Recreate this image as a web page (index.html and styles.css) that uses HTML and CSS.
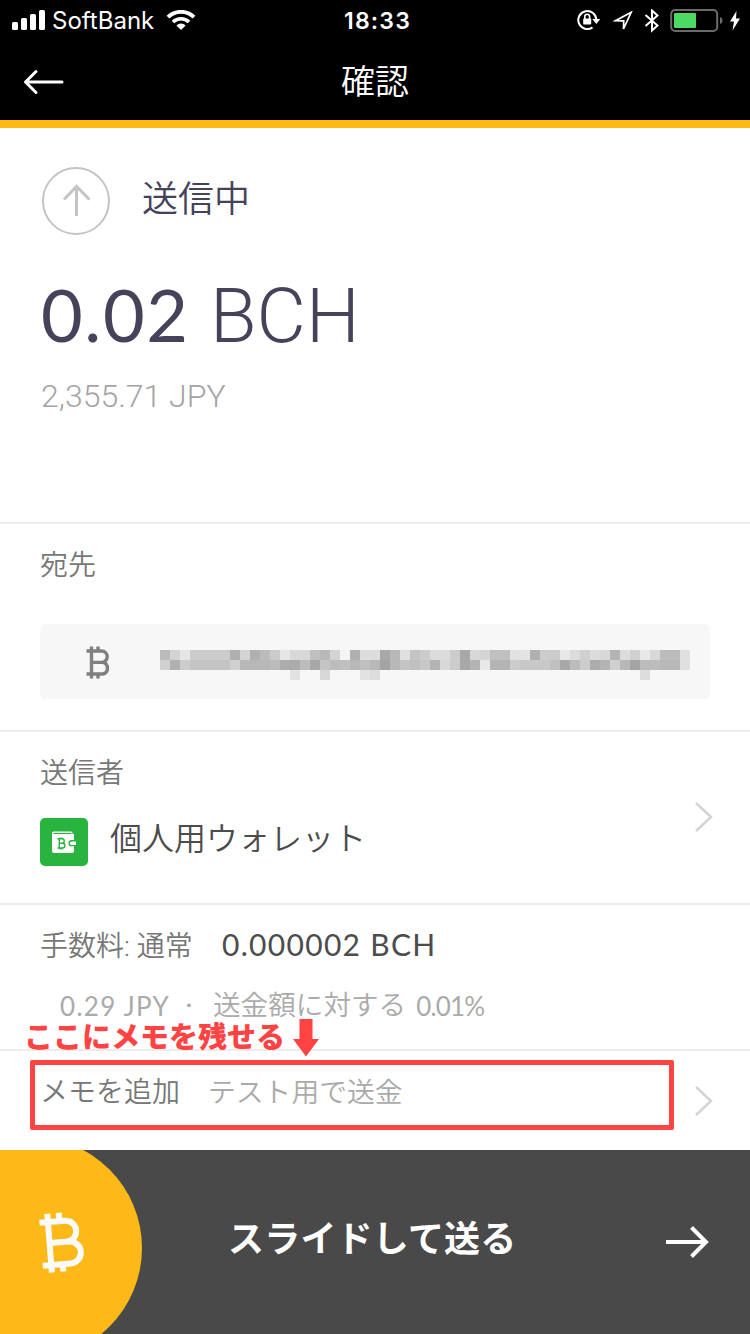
FILE: index.html
```html
<!DOCTYPE html>
<html lang="ja">
<head>
<meta charset="UTF-8">
<meta name="viewport" content="width=device-width, initial-scale=1.0">
<title>確認</title>
<link rel="stylesheet" href="styles.css">
</head>
<body>
    <header class="header">
        <div class="status">
            <div class="status-left">
                <svg width="34" height="22" viewBox="0 0 34 22" fill="#fff">
                    <rect x="0" y="12" width="6" height="8" rx="1.5"/>
                    <rect x="9" y="8" width="6" height="12" rx="1.5"/>
                    <rect x="18" y="4" width="6" height="16" rx="1.5"/>
                    <rect x="27" y="0" width="6" height="20" rx="1.5"/>
                </svg>
                <span class="carrier">SoftBank</span>
                <svg class="wifi" width="30" height="22" viewBox="0 0 30 22" fill="none" stroke="#fff" stroke-width="4">
                    <path d="M2 7.2a18.5 18.5 0 0 1 26 0"/>
                    <path d="M7 12a11.5 11.5 0 0 1 16 0" stroke-width="3.6"/>
                    <path d="M15 20l-4.6-4.6a6.5 6.5 0 0 1 9.2 0z" fill="#fff" stroke="none"/>
                </svg>
            </div>
            <span class="clock">18:33</span>
            <div class="status-right">
                <svg width="24" height="22" viewBox="0 0 24 22">
                    <path d="M15.5 17.4A9 9 0 1 1 19.3 10" fill="none" stroke="#fff" stroke-width="2"/>
                    <path d="M15.3 9h8l-4 5z" fill="#fff"/>
                    <rect x="6.2" y="8.5" width="8" height="6" rx="0.8" fill="#fff"/>
                    <path d="M7.8 9V6.7a2.4 2.4 0 0 1 4.8 0V9" fill="none" stroke="#fff" stroke-width="1.6"/>
                </svg>
                <svg class="location" width="20" height="20" viewBox="0 0 20 20" fill="none" stroke="#fff" stroke-width="1.7">
                    <path d="M18.2 1.3L2.5 9.7l8.2.2-.2 8z"/>
                </svg>
                <svg class="bluetooth" width="16" height="24" viewBox="0 0 16 24" fill="none" stroke="#fff" stroke-width="2">
                    <path d="M1.5 6l12 10.5L8 21.5V1.5l5.5 5L1.5 17"/>
                </svg>
                <svg class="battery" width="54" height="24" viewBox="0 0 54 24">
                    <rect x="1.2" y="1" width="46" height="21" rx="4" fill="none" stroke="#6b6b6b" stroke-width="2"/>
                    <rect x="4" y="4" width="22" height="15" rx="1" fill="#4cd964"/>
                    <path d="M50 8a3.7 3.7 0 0 1 0 7z" fill="#6b6b6b"/>
                </svg>
                <svg class="bolt" width="12" height="20" viewBox="0 0 12 20" fill="#fff">
                    <path d="M7.5 0L1 10.5h4L3.5 19.5 11 7.5H7z"/>
                </svg>
            </div>
        </div>
        <div class="nav">
            <svg class="back" width="42" height="26" viewBox="0 0 42 26" fill="none" stroke="#fff" stroke-width="3" stroke-linecap="round" stroke-linejoin="round">
                <path d="M40 13H3.5M14 2.5L3.5 13l10.5 10.5"/>
            </svg>
            <h1 class="title">確認</h1>
        </div>
    </header>

    <section class="amount">
        <div class="sending">
            <svg width="70" height="70" viewBox="0 0 70 70" fill="none" stroke="#c4c4c4">
                <circle cx="35" cy="35" r="33" stroke-width="2"/>
                <path d="M35.5 50V21M23 33.5l12.5-13 13 13" stroke-width="3"/>
            </svg>
            <span class="sending-text">送信中</span>
        </div>
        <div class="total"><span class="total-number">0.02</span><span class="total-unit">BCH</span></div>
        <div class="fiat">2,355.71 JPY</div>
    </section>

    <section class="to">
        <h2 class="label">宛先</h2>
        <div class="address">
            <svg class="coin" width="26" height="34" viewBox="0 0 26 34" fill="none" stroke="#808080" stroke-width="3.4">
                <path d="M.5 5H15.500a5.700 5.700 0 0 1 0 11.400H5.500M15.500 16.400h1.500a6 6 0 0 1 0 11.600H.5M5.500 5v23M5.500 .5v4M12 .5v4M5.500 28v4.500M12 28v4.500"/>
            </svg>
            <div class="mosaic" id="mosaic"></div>
        </div>
    </section>

    <section class="from">
        <div>
            <h2 class="label">送信者</h2>
            <div class="wallet">
                <svg width="48" height="48" viewBox="0 0 48 48">
                    <rect width="48" height="48" rx="5" fill="#29b33f"/>
                    <path d="M12 15a1.5 1.5 0 0 1 1.5-1.5H31a1.5 1.5 0 0 1 1.5 1.5v1H34v17a2 2 0 0 1-2 2H14a2 2 0 0 1-2-2z" fill="#fff"/>
                    <path d="M13.5 15.5h18" stroke="#29b33f" stroke-width="1.2"/>
                    <path d="M17.5 20.8H22a2.2 2.2 0 0 1 0 4.500h-3M22 25.300h.6a2.300 2.300 0 0 1 0 4.700h-5.100M19.300 20.800V30M20 19.500v1.500M22 19.500v1.500M20 29.500v2M22 29.500v2" fill="none" stroke="#29b33f" stroke-width="1.4"/>
                    <path d="M36 22.8h-4.5a2.4 2.4 0 0 0 0 4.8H36" fill="#fff" stroke="#29b33f" stroke-width="1.4"/>
                </svg>
                <span class="wallet-name">個人用ウォレット</span>
            </div>
        </div>
        <svg class="chevron" width="20" height="32" viewBox="0 0 20 32"><path d="M2 2l15 14L2 30"/></svg>
    </section>

    <section class="fee">
        <div class="fee-row"><span class="fee-label">手数料: 通常</span><span class="fee-value">0.000002 BCH</span></div>
        <div class="fee-detail"><span class="fee-jpy">0.29 JPY</span><span class="dot">·</span><span class="fee-ratio">送金額に対する</span><span class="fee-percent">0.01%</span></div>
    </section>

    <section class="memo">
        <span class="memo-label">メモを追加</span>
        <span class="memo-text">テスト用で送金</span>
        <svg class="chevron" width="20" height="32" viewBox="0 0 20 32"><path d="M2 2l15 14L2 30"/></svg>
        <!-- 注釈 -->
        <div class="note">
            <span class="note-text">ここにメモを残せる</span>
            <svg width="26" height="38" viewBox="0 0 26 38" fill="#ff4343"><path d="M6.5 0h13v20H26L13 37.5 0 20h6.5z"/></svg>
        </div>
        <div class="note-box"></div>
    </section>

    <footer class="slide">
        <div class="knob">
            <svg width="54" height="64" viewBox="0 0 54 64" fill="none" stroke="#fafafa" stroke-width="6">
                <g transform="rotate(-4.5 27 32)">
                    <path d="M5 11h25.5a10.5 10.5 0 0 1 0 21H14M30.5 32h2.5a11 11 0 0 1 0 22H5M13.5 9v48M13.5 2.5v8M25 2.5v8M13.5 54v7.5M25 54v7.5"/>
                </g>
            </svg>
        </div>
        <span class="slide-text">スライドして送る</span>
        <svg class="slide-arrow" width="46" height="34" viewBox="0 0 46 34" fill="none" stroke="#fff" stroke-width="4">
            <path d="M1 17h40M26.5 2.5L41 17 26.5 31.5"/>
        </svg>
    </footer>
    <script src="script.js"></script>
</body>
</html>
```

FILE: styles.css
```css
* {
    box-sizing: border-box;
}
body {
    margin: 0;
    width: 750px;
    height: 1334px;
    overflow: hidden;
    display: flex;
    flex-direction: column;
    background: #fff;
    font-family: Roboto, "Noto Sans CJK JP", sans-serif;
    font-weight: 300;
    white-space: nowrap;
}
svg {
    display: block;
    flex: none;
}
h1, h2 {
    margin: 0;
    font-weight: 300;
}

/* header */
.header {
    height: 128px;
    background: #000;
    border-bottom: 8px solid #fcb918;
    color: #fff;
}
.status {
    height: 40px;
    display: grid;
    grid-template-columns: 1fr auto 1fr;
    align-items: center;
    padding: 1px 9px 0 12px;
    font-family: Inter, sans-serif;
}
.status-left, .status-right {
    display: flex;
    align-items: center;
}
.status-right {
    justify-content: flex-end;
}
.carrier {
    margin-left: 6px;
    font-size: 24px;
    font-weight: 400;
}
.wifi {
    margin-left: 12px;
}
.clock {
    font-size: 23px;
    font-weight: 600;
    letter-spacing: 1.2px;
    padding-left: 2px;
}
.location {
    margin-left: 12px;
}
.bluetooth {
    margin-left: 11px;
}
.battery {
    margin-left: 10px;
}
.bolt {
    margin-left: 5px;
}
.nav {
    height: 80px;
    display: grid;
    grid-template-columns: 1fr auto 1fr;
    align-items: center;
    padding: 3px 22px 0;
}
.title {
    grid-column: 2;
    font-size: 34px;
    line-height: 40px;
    font-weight: 350;
}

/* amount */
.amount {
    height: 396px;
    padding: 38px 41px 0;
    border-bottom: 2px solid #ececec;
    color: #45425a;
}
.sending {
    display: flex;
    gap: 31px;
}
.sending-text {
    font-size: 36px;
    line-height: 68px;
    font-weight: 350;
}
.total {
    display: flex;
    align-items: baseline;
    margin-top: 33px;
    font-size: 76px;
    line-height: 90px;
}
.total-number {
    width: 169px;
    font-family: Lato, sans-serif;
    font-weight: 400;
    font-size: 72px;
    letter-spacing: 1.6px;
}
.fiat {
    margin-top: 15px;
    font-size: 32px;
    line-height: 40px;
    font-weight: 300;
    color: #a4a4a4;
}

/* address */
.label {
    font-size: 28px;
    line-height: 40px;
    font-weight: 350;
    color: #777;
}
.to {
    height: 208px;
    padding: 22px 40px 0;
    border-bottom: 2px solid #ececec;
}
.address {
    display: flex;
    height: 75px;
    margin-top: 38px;
    padding: 22px 20px 0 46px;
    border-radius: 6px;
    background: #f7f7f7;
}
.mosaic {
    display: grid;
    grid-template-columns: repeat(53, 10px);
    grid-auto-rows: 10px;
    margin: 4px 0 0 48px;
}

/* wallet */
.from {
    height: 173px;
    display: flex;
    justify-content: space-between;
    padding: 22px 36px 0 40px;
    border-bottom: 2px solid #ececec;
}
.wallet {
    display: flex;
    margin-top: 24px;
}
.wallet-name {
    margin-left: 22px;
    font-size: 32px;
    line-height: 42px;
    font-weight: 350;
    color: #4c4c4c;
}
.chevron {
    fill: none;
    stroke: #d4d4d4;
    stroke-width: 2.5;
}
.from .chevron {
    margin-top: 47px;
}

/* fee */
.fee {
    height: 146px;
    padding: 21px 40px 0;
    border-bottom: 2px solid #ececec;
    font-size: 28px;
    line-height: 40px;
}
.fee-row, .fee-detail {
    display: flex;
}
.fee-label {
    width: 182px;
    padding-top: 1px;
    font-weight: 350;
    color: #777;
}
.fee-value {
    font-family: Lato, sans-serif;
    font-weight: 400;
    font-size: 30px;
    line-height: 36px;
    letter-spacing: 1.3px;
    color: #4c4c4c;
}
.fee-detail {
    margin-top: 19px;
    padding-left: 20px;
    color: #aaa;
}
.fee-jpy, .fee-percent {
    font-family: Lato, sans-serif;
    font-weight: 400;
    font-size: 26px;
}
.dot {
    width: 42px;
    padding-left: 14px;
    font-weight: 500;
}
.fee-jpy {
    width: 111px;
    letter-spacing: 1.3px;
}
.fee-ratio {
    font-size: 27.6px;
    font-weight: 350;
}
.fee-percent {
    margin-left: 10px;
    letter-spacing: -0.8px;
}

/* memo */
.memo {
    position: relative;
    display: flex;
    height: 99px;
    padding: 22px 36px 0 40px;
    font-size: 28px;
    line-height: 40px;
    font-weight: 350;
}
.memo-label {
    width: 168px;
    color: #777;
}
.memo-text {
    font-size: 27.8px;
    color: #aaa;
}
.memo .chevron {
    margin: 12px 0 0 auto;
}
.note {
    position: absolute;
    left: 24px;
    top: -32px;
    display: flex;
    gap: 8px;
    color: #ff4343;
}
.note-text {
    font-size: 29px;
    line-height: 38px;
    font-weight: 900;
}
.note-box {
    position: absolute;
    left: 30px;
    top: 9px;
    width: 644px;
    height: 70px;
    border: 5px solid #ff4343;
    border-radius: 2px;
}

/* slide to send */
.slide {
    flex: 1;
    display: flex;
    align-items: center;
    overflow: hidden;
    background: #494949;
    color: #fff;
}
.knob {
    flex: none;
    display: flex;
    align-items: center;
    width: 222px;
    height: 222px;
    margin: 12px 0 0 -80px;
    padding: 0 0 12px 116px;
    border-radius: 50%;
    background: #fcb918;
}
.slide-text {
    margin: -12px auto 0 86px;
    font-size: 36px;
    font-weight: 700;
    letter-spacing: 0.2px;
}
.slide-arrow {
    margin-right: 39px;
}
```

FILE: script.js
```js
// grey level of each 10px cell, row by row
var rows = [
    "bb d4 e6 cc cc cc cc b0 d4 b0 bb cc e6 d8 d8 c0 b8 d4 f5 b0 dd dd a8 b8 e0 c4 cc dc dc cc a8 d8 d4 c0 c0 e2 e4 b0 cc cc e8 dc d0 dc d8 b4 dc d0 e8 d8 bc bc e0",
    "d0 b0 cc c4 c4 c4 c4 d0 b8 b8 b8 bc ac ac bc a8 c4 bc c0 b8 c0 b8 a4 b8 c4 c0 c8 b4 d8 cc a8 b4 e8 b4 b4 cc c8 c8 c8 c0 a8 bc cc ac b4 d0 b8 a4 bc bc b8 b8 e0",
    "f7 f7 f7 f7 f7 f7 f7 f7 f7 f7 f7 f7 f7 e2 f7 f7 d8 f7 f7 f7 e2 dd f7 f7 f7 f7 f7 f7 f7 f7 f7 f7 f7 f7 f7 f7 f7 f7 f7 f7 f7 f7 f7 f7 f7 f7 f7 f7 dd f7 f7 f7 f7"
];
var mosaic = document.getElementById('mosaic');
rows.join(' ').split(' ').forEach(function (c) {
    var cell = document.createElement('span');
    cell.style.background = '#' + c + c + c;
    mosaic.appendChild(cell);
});
```
